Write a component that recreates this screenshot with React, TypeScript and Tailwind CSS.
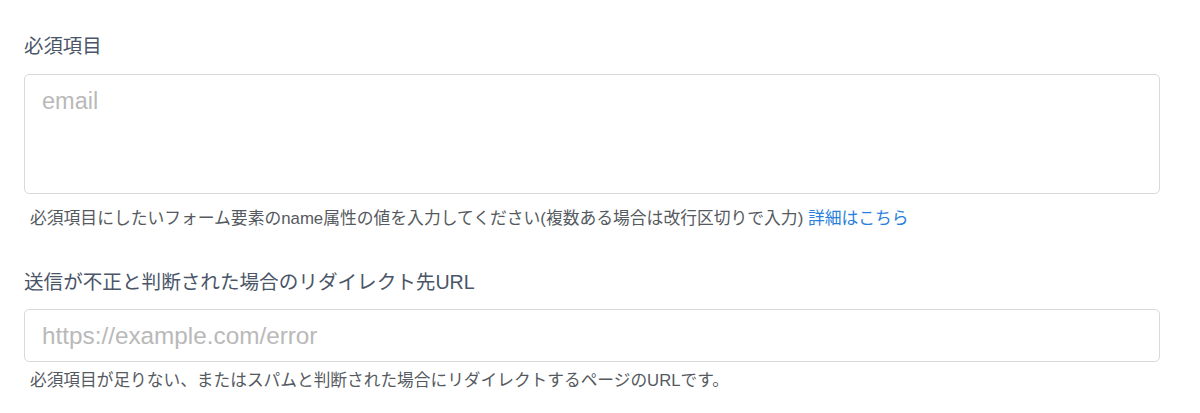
import React from "react";

const font = { fontFamily: '"Liberation Sans", "Noto Sans CJK JP", sans-serif' };

export default function App() {
  return (
    <div className="w-[1200px] h-[413px] bg-white overflow-hidden" style={font}>
      <div className="pl-[24px] pt-[34px] w-[1160px] flex flex-col">
        <label className="text-[19.4px] leading-[24px] text-[#4a5568]">必須項目</label>
        <textarea
          placeholder="email"
          className="mt-[16px] h-[120px] w-full resize-none rounded-[5px] border border-[#d9d9d9] px-[17px] py-[11px] text-[23.5px] leading-[30px] text-[#333] placeholder:text-[#b9b9b9] outline-none"
        />
        <p className="mt-[13px] pl-[6px] text-[16.8px] leading-[24px] text-[#555a60]">
          必須項目にしたいフォーム要素のname属性の値を入力してください(複数ある場合は改行区切りで入力){" "}
          <a className="text-[#2a7fdc]">詳細はこちら</a>
        </p>
        <label className="mt-[39px] text-[19.6px] leading-[24px] text-[#4a5568]">
          送信が不正と判断された場合のリダイレクト先URL
        </label>
        <input
          placeholder="https://example.com/error"
          className="mt-[15px] h-[53px] w-full rounded-[5px] border border-[#d9d9d9] px-[17px] text-[24.3px] text-[#333] placeholder:text-[#b9b9b9] outline-none"
        />
        <p className="mt-[7px] pl-[6px] text-[16.7px] leading-[24px] text-[#555a60]">
          必須項目が足りない、またはスパムと判断された場合にリダイレクトするページのURLです。
        </p>
      </div>
    </div>
  );
}
